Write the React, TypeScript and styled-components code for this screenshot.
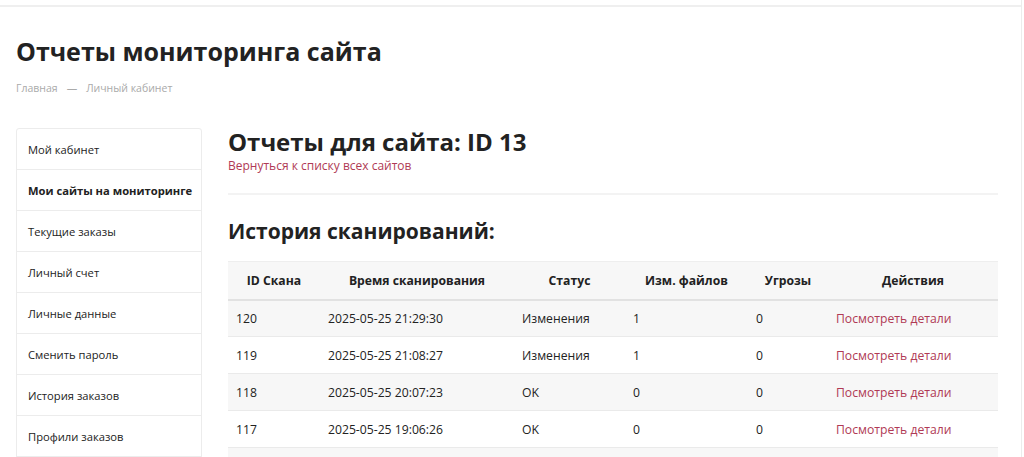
import { createGlobalStyle, styled } from "styled-components";

const GlobalStyle = createGlobalStyle`
  html, body {
    margin: 0;
    padding: 0;
    background: #fff;
    font-family: "Open Sans", "Liberation Sans", sans-serif;
    color: #222;
  }
  * { box-sizing: border-box; }
`;

const Page = styled.div`
  width: 1022px;
  height: 457px;
  border-right: 1px solid #ececec;
  overflow: hidden;
`;

const TopBar = styled.div`
  height: 7px;
  border-bottom: 2px solid #efefef;
`;

const PageHead = styled.div`
  padding: 27px 16px 0;
`;

const PageTitle = styled.h1`
  margin: 0;
  font-size: 25px;
  font-weight: 700;
  line-height: 34px;
  color: #222;
`;

const Breadcrumbs = styled.div`
  margin-top: 13px;
  font-size: 10.5px;
  color: #aaa;
  display: flex;
  gap: 9px;
`;

const Body = styled.div`
  display: flex;
  gap: 26px;
  padding: 33px 24px 0 16px;
`;

const SideMenu = styled.ul`
  list-style: none;
  margin: 0;
  padding: 0;
  width: 186px;
  flex-shrink: 0;
  border: 1px solid #ececec;
  border-radius: 3px 3px 0 0;
`;

const MenuItem = styled.li<{ $active?: boolean }>`
  height: 41px;
  display: flex;
  align-items: center;
  padding-left: 11px;
  font-size: 11.2px;
  font-weight: ${(p) => (p.$active ? 700 : 400)};
  color: #222;
  border-bottom: 1px solid #ececec;
`;

const Main = styled.div`
  flex: 1;
`;

const SiteTitle = styled.h2`
  margin: 0;
  font-size: 24px;
  font-weight: 700;
  line-height: 28px;
`;

const BackLink = styled.a`
  display: block;
  font-size: 12px;
  color: #b03a55;
  text-decoration: none;
  margin-top: 1px;
`;

const Divider = styled.hr`
  margin: 19px 0 0;
  border: none;
  border-top: 2px solid #f3f3f3;
`;

const SectionTitle = styled.h3`
  margin: 21px 0 0;
  font-size: 21px;
  font-weight: 700;
  line-height: 30px;
`;

const Table = styled.table`
  margin-top: 15px;
  width: 770px;
  border-collapse: collapse;
  font-size: 12.2px;
  table-layout: fixed;
`;

const Th = styled.th<{ $w: number }>`
  width: ${(p) => p.$w}px;
  height: 38px;
  background: #f7f7f7;
  font-weight: 700;
  text-align: center;
  border-bottom: 2px solid #e2e2e2;
  border-top: 1px solid #eeeeee;
  padding: 0 8px;
`;

const Tr = styled.tr`
  &:nth-child(odd) {
    background: #f7f7f7;
  }
  border-bottom: 1px solid #eaeaea;
`;

const Td = styled.td`
  height: 37px;
  padding: 0 8px;
  text-align: left;
  color: #222;
`;

const DetailLink = styled.a`
  color: #b03a55;
  text-decoration: none;
`;

const menu = [
  "Мой кабинет",
  "Мои сайты на мониторинге",
  "Текущие заказы",
  "Личный счет",
  "Личные данные",
  "Сменить пароль",
  "История заказов",
  "Профили заказов",
  "",
];

const columns: [string, number][] = [
  ["ID Скана", 92],
  ["Время сканирования", 194],
  ["Статус", 111],
  ["Изм. файлов", 123],
  ["Угрозы", 80],
  ["Действия", 170],
];

const scans = [
  { id: 120, time: "2025-05-25 21:29:30", status: "Изменения", files: 1, threats: 0 },
  { id: 119, time: "2025-05-25 21:08:27", status: "Изменения", files: 1, threats: 0 },
  { id: 118, time: "2025-05-25 20:07:23", status: "OK", files: 0, threats: 0 },
  { id: 117, time: "2025-05-25 19:06:26", status: "OK", files: 0, threats: 0 },
  { id: 116, time: "2025-05-25 18:05:11", status: "OK", files: 0, threats: 0 },
];

export default function App() {
  return (
    <Page>
      <GlobalStyle />
      <TopBar />
      <PageHead>
        <PageTitle>Отчеты мониторинга сайта</PageTitle>
        <Breadcrumbs>
          <span>Главная</span>
          <span>—</span>
          <span>Личный кабинет</span>
        </Breadcrumbs>
      </PageHead>
      <Body>
        <SideMenu>
          {menu.map((m, i) => (
            <MenuItem key={i} $active={i === 1}>
              {m}
            </MenuItem>
          ))}
        </SideMenu>
        <Main>
          <SiteTitle>Отчеты для сайта: ID 13</SiteTitle>
          <BackLink href="#">Вернуться к списку всех сайтов</BackLink>
          <Divider />
          <SectionTitle>История сканирований:</SectionTitle>
          <Table>
            <thead>
              <tr>
                {columns.map(([c, w]) => (
                  <Th key={c} $w={w}>
                    {c}
                  </Th>
                ))}
              </tr>
            </thead>
            <tbody>
              {scans.map((s) => (
                <Tr key={s.id}>
                  <Td>{s.id}</Td>
                  <Td>{s.time}</Td>
                  <Td>{s.status}</Td>
                  <Td>{s.files}</Td>
                  <Td>{s.threats}</Td>
                  <Td>
                    <DetailLink href="#">Посмотреть детали</DetailLink>
                  </Td>
                </Tr>
              ))}
            </tbody>
          </Table>
        </Main>
      </Body>
    </Page>
  );
}
